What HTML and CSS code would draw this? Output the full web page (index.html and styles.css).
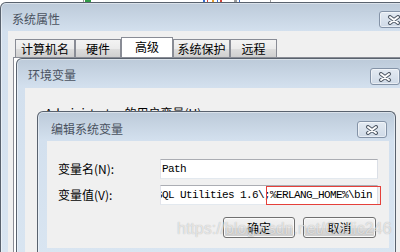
FILE: index.html
```html
<!DOCTYPE html>
<html lang="zh-CN">

<head>
    <meta charset="UTF-8">
    <title>编辑系统变量</title>
    <link rel="stylesheet" href="styles.css">
</head>

<body>
    <div class="desk">
        <div class="strip">
            <i class="bit gray" style="margin-left:83px"></i>
            <i class="bit green" style="margin-left:1px;width:6px"></i>
            <i class="bit blue" style="margin-left:112px;width:2px"></i>
            <i class="bit red" style="margin-left:2px"></i>
            <i class="bit orange" style="margin-left:4px;width:2px"></i>
            <i class="bit blue" style="margin-left:3px"></i>
            <i class="bit red" style="margin-left:2px;width:2px"></i>
            <i class="bit gray" style="margin-left:12px;width:3px"></i>
            <i class="bit blue" style="margin-left:2px"></i>
            <i class="bit gray" style="margin-left:30px"></i>
        </div>

        <!-- 系统属性 -->
        <div class="win w1">
            <div class="bar">
                <span class="caption">系统属性</span>
                <span class="close">
                    <svg width="14" height="10" viewBox="0 0 14 10">
                        <path d="M3 2 L11 8 M11 2 L3 8" stroke="#4f5966" stroke-width="4" stroke-linecap="round" />
                        <path d="M3 2 L11 8 M11 2 L3 8" stroke="#fff" stroke-width="2" stroke-linecap="round" />
                    </svg>
                </span>
            </div>
            <div class="client">
                <ul class="tabs">
                    <li class="t1">计算机名</li>
                    <li class="t2">硬件</li>
                    <li class="t3 on">高级</li>
                    <li class="t4">系统保护</li>
                    <li class="t5">远程</li>
                </ul>
                <div class="panel"></div>
            </div>
        </div>

        <!-- 环境变量 -->
        <div class="win w2">
            <div class="bar">
                <span class="caption">环境变量</span>
                <span class="close">
                    <svg width="14" height="10" viewBox="0 0 14 10">
                        <path d="M3 2 L11 8 M11 2 L3 8" stroke="#4f5966" stroke-width="4" stroke-linecap="round" />
                        <path d="M3 2 L11 8 M11 2 L3 8" stroke="#fff" stroke-width="2" stroke-linecap="round" />
                    </svg>
                </span>
            </div>
            <div class="client">
                <p class="group">Administrator 的用户变量(U)</p>
            </div>
        </div>

        <!-- 编辑系统变量 -->
        <div class="win w3">
            <div class="bar">
                <span class="caption">编辑系统变量</span>
                <span class="close">
                    <svg width="14" height="10" viewBox="0 0 14 10">
                        <path d="M3 2 L11 8 M11 2 L3 8" stroke="#4f5966" stroke-width="4" stroke-linecap="round" />
                        <path d="M3 2 L11 8 M11 2 L3 8" stroke="#fff" stroke-width="2" stroke-linecap="round" />
                    </svg>
                </span>
            </div>
            <div class="client">
                <div class="row">
                    <label>变量名(N):</label>
                    <div class="box"><span class="txt">Path</span></div>
                </div>
                <div class="row">
                    <label>变量值(V):</label>
                    <div class="box">
                        <span class="txt scrolled"><span>SQL Utilities 1.6\;%ERLANG_HOME%\bin</span></span>
                        <span class="mark"></span>
                    </div>
                </div>
                <div class="btns">
                    <button class="btn">确定</button>
                    <button class="btn">取消</button>
                </div>
            </div>
        </div>

        <div class="watermark">https://blog.csdn.net/Gallic246</div>
    </div>
</body>

</html>
```

FILE: styles.css
```css
* {
    margin: 0;
    padding: 0;
    box-sizing: border-box;
    list-style: none;
}

body {
    width: 400px;
    height: 252px;
    overflow: hidden;
    background: #fff;
    font-family: "Noto Sans CJK SC", sans-serif;
    font-size: 12px;
    color: #000;
}

.desk {
    position: relative;
    width: 400px;
    height: 252px;
    overflow: hidden;
}

/* 背景里别的窗口露出来的一点 */
.strip {
    display: flex;
    height: 2px;
}

.bit {
    display: block;
    width: 1px;
    height: 2px;
}

.gray { background: #9a9a9a; }
.green { background: #2f9a46; }
.blue { background: #3b6fd0; }
.red { background: #d0453b; }
.orange { background: #e39b2e; }

/* 窗口 */
.win {
    position: absolute;
    display: flex;
    flex-direction: column;
    border: 1px solid #59626e;
    border-bottom: none;
    border-radius: 6px 6px 0 0;
    background: linear-gradient(#bccad9, #d3e0ee 28px, #d9e5f1);
    box-shadow: inset 0 0 0 1px rgba(255, 255, 255, 0.45);
}

.bar {
    display: flex;
    align-items: flex-start;
    flex: none;
}

.caption {
    margin-top: 9px;
    line-height: 14px;
    color: #4a5260;
}

.close {
    display: flex;
    align-items: center;
    justify-content: center;
    margin-left: auto;
    margin-top: 9px;
    margin-right: 8px;
    width: 30px;
    height: 17px;
    border: 1px solid #8493a7;
    border-radius: 3px;
    background: linear-gradient(#e3eaf2, #cfdae7);
    box-shadow: inset 0 0 0 1px rgba(255, 255, 255, 0.5);
}

.client {
    flex: 1;
    background: #f0f0f0;
}

.w1 {
    left: 0;
    top: 2px;
    width: 418px;
    height: 262px;
}

.w1 .bar {
    height: 28px;
    padding-left: 11px;
}

.w1 .close {
    margin-top: 8px;
}

.w1 .client {
    margin-left: 7px;
    padding: 6px 0 0 5px;
}

.tabs {
    display: flex;
    align-items: flex-end;
    height: 20px;
    padding-left: 2px;
}

.tabs li {
    height: 18px;
    line-height: 17px;
    text-align: center;
    border: 1px solid #898c95;
    border-bottom: none;
    background: linear-gradient(#f3f3f3, #ebebeb 50%, #dedede 51%, #cfcfcf);
}

.tabs .t1 { width: 60px; }
.tabs .t2 { width: 46px; }
.tabs .t3 { width: 52px; }
.tabs .t4 { width: 57px; }
.tabs .t5 { width: 47px; }

.tabs .on {
    height: 20px;
    line-height: 18px;
    background: #fff;
}

.panel {
    height: 220px;
    background: #fff;
    border: 1px solid #898c95;
}

.w2 {
    left: 16px;
    top: 58px;
    width: 393px;
    height: 220px;
}

.w2 .bar {
    height: 29px;
    padding-left: 11px;
}

.w2 .client {
    margin-left: 8px;
    padding: 18px 0 0 20px;
}

.group {
    line-height: 14px;
    white-space: nowrap;
}

.w3 {
    left: 37px;
    top: 111px;
    width: 359px;
    height: 146px;
}

.w3 .bar {
    height: 29px;
    padding-left: 13px;
}

.w3 .caption {
    margin-top: 10px;
}

.w3 .client {
    flex: none;
    height: 107px;
    margin: 0 6px 0 9px;
    padding: 18px 0 0 11px;
}

.row {
    display: flex;
    align-items: center;
    height: 20px;
}

.row + .row {
    margin-top: 6px;
}

.row label {
    width: 102px;
    line-height: 14px;
}

.box {
    position: relative;
    width: 218px;
    height: 20px;
    border: 1px solid;
    border-color: #abadb3 #dbdfe6 #e3e9ef #e2e3ea;
    background: #fff;
}

.txt {
    display: block;
    overflow: hidden;
    white-space: nowrap;
    padding-left: 1px;
    font-family: "Liberation Mono", monospace;
    font-size: 11px;
    letter-spacing: -0.6px;
    line-height: 18px;
}

.scrolled {
    padding-left: 0;
}

.scrolled span {
    display: inline-block;
    margin-left: -5px;
}

/* 截图上的红框标注 */
.mark {
    position: absolute;
    left: 105px;
    top: 0;
    width: 115px;
    height: 19px;
    border: 1px solid #e5403a;
}

.btns {
    display: flex;
    gap: 8px;
    margin-top: 12px;
    padding-left: 165px;
}

.btn {
    width: 72px;
    height: 21px;
    font-family: "Noto Sans CJK SC", sans-serif;
    font-size: 12px;
    line-height: 19px;
    color: #000;
    border: 1px solid #707070;
    border-radius: 3px;
    background: linear-gradient(#f2f2f2, #ebebeb 50%, #dddddd 51%, #cfcfcf);
    box-shadow: inset 0 0 0 1px #fbfbfb;
}

.btn + .btn {
    width: 73px;
}

.watermark {
    position: absolute;
    left: 177px;
    top: 220px;
    font-family: "Liberation Sans", Arial, sans-serif;
    font-size: 16px;
    line-height: 18px;
    white-space: nowrap;
    color: rgba(255, 255, 255, 0.65);
    text-shadow: 0 0 1px rgba(0, 0, 0, 0.3);
}
```
